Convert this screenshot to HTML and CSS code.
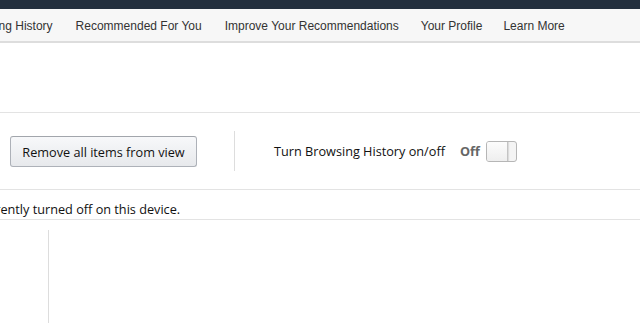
FILE: index.html
```html
<!DOCTYPE html>
<html lang="en">
<head>
    <meta charset="utf-8">
    <title>Your Browsing History</title>
    <link rel="stylesheet" href="styles.css">
</head>
<body>
<div class="topbar"></div>
<div class="nav">
    <ul class="nav-list">
        <li class="nav-first">Your Browsing History</li>
        <li>Recommended For You</li>
        <li>Improve Your Recommendations</li>
        <li>Your Profile</li>
        <li>Learn More</li>
    </ul>
</div>
<div class="spacer"></div>
<div class="controls">
    <button class="btn">Remove all items from view</button>
    <div class="divider"></div>
    <span class="toggle-label">Turn Browsing History on/off</span>
    <span class="toggle-state">Off</span>
    <span class="switch"><span class="knob"></span></span>
</div>
<div class="notice"><span class="notice-text">Browsing History is currently turned off on this device.</span></div>
<div class="content">
    <div class="sidebar"></div>
    <div class="main"></div>
</div>
</body>
</html>
```

FILE: styles.css
```css
html, body {
    margin: 0;
    padding: 0;
    background: #fff;
    overflow: hidden;
}
body {
    font-family: 'Open Sans', sans-serif;
    color: #111;
}
.topbar {
    height: 9px;
    background-color: #232f3e;
}
.nav {
    height: 32px;
    background-color: #f7f7f7;
    border-bottom: 2px solid #dddddd;
    overflow: hidden;
}
.nav-list {
    list-style: none;
    margin: 0;
    padding: 2px 0 0 0;
    display: flex;
    gap: 23px;
    white-space: nowrap;
    font-family: 'Liberation Sans', sans-serif;
    font-size: 12px;
    line-height: 30px;
    color: #333;
}
.nav-list li:nth-child(4) {
    margin-left: -1px;
}
.nav-list li:nth-child(5) {
    margin-left: -2px;
}
.nav-first {
    margin-left: -65px;
}
.spacer {
    height: 69px;
    border-bottom: 1px solid #e3e3e3;
}
.controls {
    height: 76px;
    display: flex;
    align-items: center;
    padding-left: 10px;
    border-bottom: 1px solid #e3e3e3;
}
.btn {
    height: 31px;
    width: 187px;
    padding: 1px 0 0 0;
    font-family: 'Open Sans', sans-serif;
    font-size: 12.7px;
    color: #111;
    background: linear-gradient(#f7f8fa, #e7e9ec);
    border: 1px solid #adb1b8;
    border-top-color: #a2a6ac;
    border-radius: 3px;
}
.divider {
    width: 1px;
    height: 40px;
    background: #ddd;
    margin-left: 37px;
    margin-right: 39px;
}
.toggle-label {
    font-size: 12.7px;
}
.toggle-state {
    font-size: 12.7px;
    font-weight: bold;
    color: #666;
    margin-left: 15px;
    margin-right: 6px;
}
.switch {
    display: inline-flex;
    width: 29px;
    height: 19px;
    border: 1px solid #b6b6b6;
    border-radius: 3px;
    background: #f4f4f4;
    overflow: hidden;
}
.knob {
    width: 20px;
    height: 19px;
    background: linear-gradient(#fcfcfc, #eeeeee);
    border-right: 1px solid #c4c4c4;
    box-shadow: 1px 0 1px rgba(0,0,0,0.1);
}
.notice {
    height: 29px;
    border-bottom: 1px solid #e3e3e3;
    overflow: hidden;
    white-space: nowrap;
}
.notice-text {
    display: inline-block;
    font-size: 12.7px;
    line-height: 16px;
    margin-top: 11px;
    margin-left: -140px;
}
.content {
    display: flex;
    padding-top: 10px;
    height: 93px;
}
.sidebar {
    width: 48px;
    border-right: 1px solid #ddd;
}
.main {
    flex: 1;
}
```
